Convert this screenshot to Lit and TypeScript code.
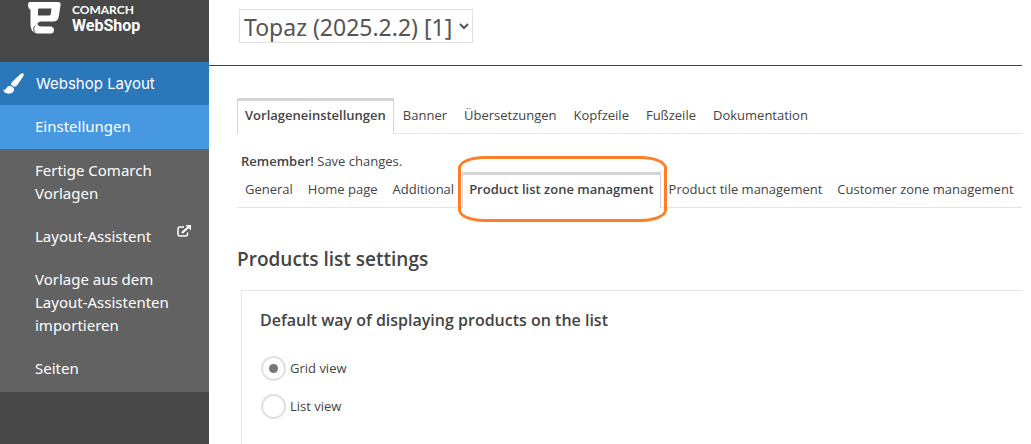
import { LitElement, html, css } from "lit";
import { customElement, state } from "lit/decorators.js";

const MAIN_TABS = ["Vorlageneinstellungen", "Banner", "Übersetzungen", "Kopfzeile", "Fußzeile", "Dokumentation"];
const SUB_TABS = ["General", "Home page", "Additional", "Product list zone managment", "Product tile management", "Customer zone management"];

@customElement("side-nav")
class SideNav extends LitElement {
  static styles = css`
    :host { display: block; background: #484848; color: #fff; }
    .brand { display: flex; gap: 11px; height: 60px; padding: 2px 0 0 28px; }
    .mark { width: 33px; height: 32px; }
    .name { font: 700 16px/17px "Roboto", sans-serif; }
    .name small { display: block; font: 700 12px/15px "Lato", sans-serif; }
    a { display: block; color: inherit; text-decoration: none; }
    .section { display: flex; align-items: center; gap: 12px; height: 43px; padding-left: 3px; background: #2a77ba; font: 15px/24px "Inter", sans-serif; }
    .menu { list-style: none; margin: 0; padding: 0 0 2px; background: #626262; font: 15px/23px "Noto Sans", sans-serif; }
    .menu a { display: flex; justify-content: space-between; padding: 10px 18px 10px 35px; }
    .menu .current { padding-bottom: 11px; background: #4698e1; }
    .menu span { max-width: 144px; }
  `;
  render() {
    return html`
      <div class="brand">
        <svg class="mark" viewBox="0 0 33 32" aria-hidden="true">
          <path fill="#fff" fill-rule="evenodd" d="M2 0H30Q33 0 32.600 3L31 13Q30.300 19.500 26 19.500H13Q9.500 20 9.500 22Q10 24.500 14 24.500H23Q26 25 26 28Q26 31.500 22.500 31.500H9Q2.500 30 2.500 23V8Q0 6.500 0 3Q0 0 2 0ZM11 6.500Q10 6.500 10 8V13.500H21Q22.500 13.500 22.800 12L23.500 6.500Z" />
          <path fill="none" stroke="#484848" d="M6.500 30.500Q4.500 25.500 7.500 23.500" />
        </svg>
        <div class="name"><small>COMARCH</small>WebShop</div>
      </div>
      <nav>
        <a class="section" href="#layout">
          <svg width="21" height="21" viewBox="0 0 21 21" aria-hidden="true">
            <path fill="#fff" d="M19.500.3C21 .5 21 2 20.300 3.300L14 12.500Q12 14.500 9.500 13L8.300 11.800Q7.500 10.500 9 9L17.500 1ZM7.600 12.800L11 15.300Q11.500 20.500 5.500 20.700Q1 20.500 0 16.500Q1.300 17 2.500 16.500C3.500 15 4.500 12.500 7.600 12.800Z" />
          </svg>
          Webshop Layout
        </a>
        <ul class="menu">
          <li><a class="current" href="#settings"><span>Einstellungen</span></a></li>
          <li><a href="#ready"><span>Fertige Comarch Vorlagen</span></a></li>
          <li><a href="#assistant"><span>Layout-Assistent</span>
            <svg width="14" height="12" viewBox="0 0 14 12" aria-hidden="true">
              <path fill="none" stroke="#fff" stroke-width="1.500" d="M7 2H3Q1 2 1 4V9Q1 11 3 11H8.500Q10.500 11 10.500 9V7.500" />
              <path fill="none" stroke="#fff" stroke-width="2.200" d="M5 8L11.500 2" />
              <path fill="#fff" d="M8.500 0H14V5.500Z" />
            </svg></a></li>
          <li><a href="#import"><span>Vorlage aus dem Layout-Assistenten importieren</span></a></li>
          <li><a href="#pages"><span>Seiten</span></a></li>
        </ul>
      </nav>
    `;
  }
}

@customElement("app-root")
class AppRoot extends LitElement {
  @state() private mainTab = 0;
  @state() private subTab = 3;

  static styles = css`
    :host { display: grid; grid-template-columns: 209px minmax(0, 1fr); min-height: 100vh; background: #fff; color: #444; font: 13px/20px "Open Sans", sans-serif; }
    main { display: flex; flex-direction: column; padding-right: 9px; }
    .top { padding: 9px 0 22px 30px; border-bottom: 1px solid #444; }
    .top select { height: 34px; padding: 0 3px 0 0; border: 1px solid #e2e2e2; border-radius: 0; background: #fff; color: #555; font: 23px/32px "Noto Sans", sans-serif; }
    .content { display: flex; flex-direction: column; flex: 1; padding: 32px 0 0 28px; }
    .tabs { display: flex; gap: 1px; border-bottom: 1px solid #e5e5e5; }
    .tabs button { position: relative; flex: none; margin: 0 0 -1px; padding: 4px 7px 9px; border: 1px solid transparent; border-width: 3px 1px 0; background: none; color: inherit; font: inherit; cursor: pointer; }
    .tabs button[aria-selected="true"] { border-color: #d5d5d5; background: #fff; font-weight: 600; }
    .sub { padding-left: 1px; }
    .sub button { padding-inline: 6px; }
    .note { margin: 17px 0 1px 4px; }
    .note b { font-weight: 600; }
    .marked::after { content: ""; position: absolute; inset: -19px -7px -14px -5px; border: 3px solid #ff7f27; border-radius: 26px / 12px; pointer-events: none; }
    h1 { margin: 37px 0 0; font: 600 19px/28px "Open Sans", sans-serif; }
    .card { flex: 1; margin: 17px 0 0 4px; padding: 17px 18px; border: 1px solid #e5e5e5; border-width: 1px 0 0 1px; }
    fieldset { display: grid; gap: 12px; margin: 0; padding: 0; border: 0; }
    legend { margin-bottom: 23px; padding: 0; font: 600 16px/24px "Open Sans", sans-serif; }
    label { display: flex; align-items: center; gap: 4px; height: 26px; }
    input { appearance: none; display: grid; place-items: center; width: 25px; height: 25px; margin: 0 0 0 1px; border: 2px solid #e0e0e0; border-radius: 50%; }
    input:checked::before { content: ""; width: 9px; height: 9px; border-radius: 50%; background: #777; }
  `;

  render() {
    return html`
      <side-nav></side-nav>
      <main>
        <header class="top">
          <select aria-label="Template"><option>Topaz (2025.2.2) [1]</option></select>
        </header>
        <div class="content">
          <div class="tabs" role="tablist">
            ${MAIN_TABS.map((t, i) => html`<button role="tab" aria-selected=${i === this.mainTab} @click=${() => (this.mainTab = i)}>${t}</button>`)}
          </div>
          <p class="note"><b>Remember!</b> Save changes.</p>
          <div class="tabs sub" role="tablist">
            ${SUB_TABS.map((t, i) => html`<button role="tab" class=${i === 3 ? "marked" : ""} aria-selected=${i === this.subTab} @click=${() => (this.subTab = i)}>${t}</button>`)}
          </div>
          <h1>Products list settings</h1>
          <section class="card">
            <fieldset>
              <legend>Default way of displaying products on the list</legend>
              <label><input type="radio" name="view" checked />Grid view</label>
              <label><input type="radio" name="view" />List view</label>
            </fieldset>
          </section>
        </div>
      </main>
    `;
  }
}
